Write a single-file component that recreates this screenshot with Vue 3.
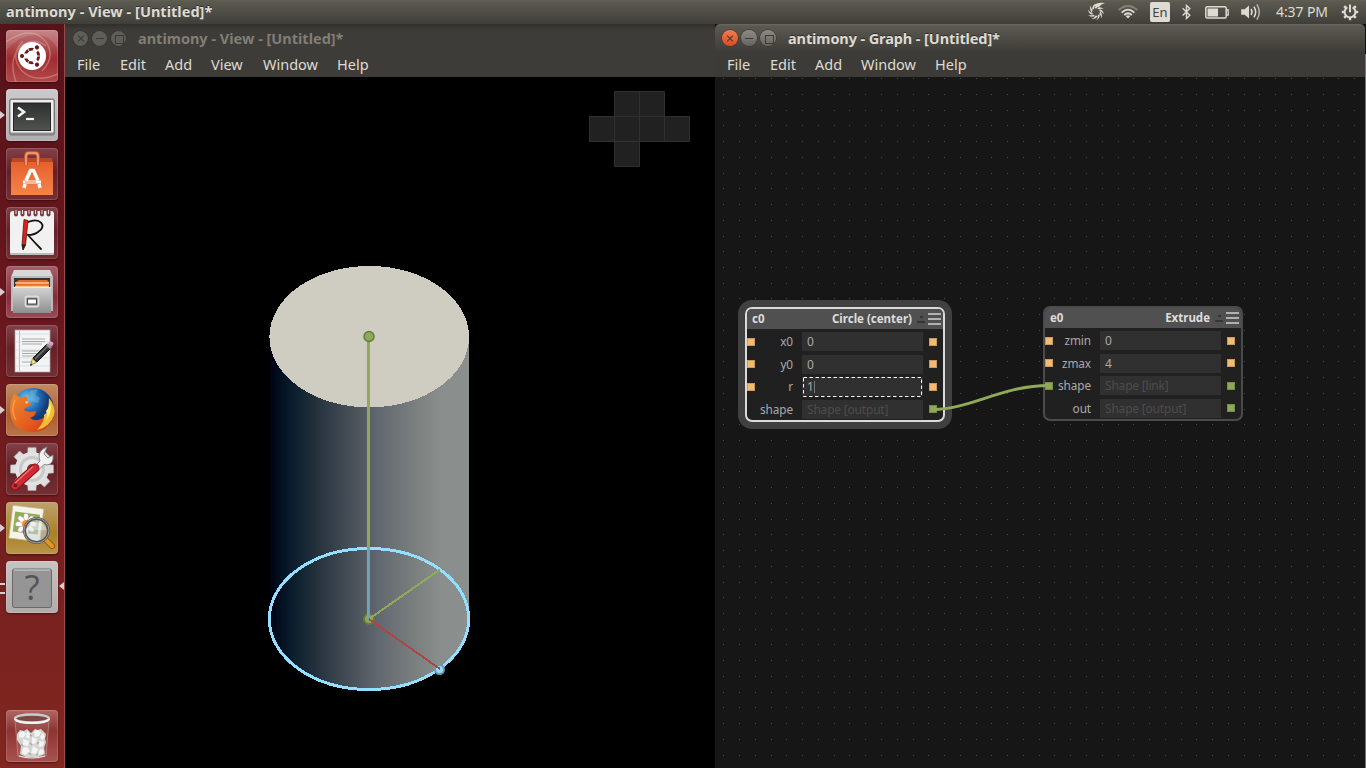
<script setup>
const viewMenus = ['File', 'Edit', 'Add', 'View', 'Window', 'Help']
const graphMenus = ['File', 'Edit', 'Add', 'Window', 'Help']

const nodes = [
  {
    id: 'c0', type: 'Circle (center)', selected: true,
    rows: [
      { label: 'x0', value: '0', left: 'num', right: 'num' },
      { label: 'y0', value: '0', left: 'num', right: 'num' },
      { label: 'r', value: '1', left: 'num', right: 'num', editing: true },
      { label: 'shape', value: 'Shape [output]', muted: true, right: 'geo' },
    ],
  },
  {
    id: 'e0', type: 'Extrude', selected: false,
    rows: [
      { label: 'zmin', value: '0', left: 'num', right: 'num' },
      { label: 'zmax', value: '4', left: 'num', right: 'num' },
      { label: 'shape', value: 'Shape [link]', muted: true, left: 'geo', right: 'geo' },
      { label: 'out', value: 'Shape [output]', muted: true, right: 'geo' },
    ],
  },
]

// One-pixel grid dots, snapped to whole pixels.
let dots = ''
for (let j = 0; j < 44; j++) {
  for (let i = 0; i < 41; i++) {
    dots += `M${Math.round(8.3 + i * 15.77)} ${Math.floor(1.7 + j * 15.73)}h1v1h-1z`
  }
}

const blades = [0, 36, 72, 108, 144, 180, 216, 252, 288, 324]
const teeth = [0, 45, 90, 135, 180, 225, 270, 315]
</script>

<template>
  <div class="desktop">
    <header class="panel">
      <span class="title panel-title">antimony - View - [Untitled]*</span>
      <div class="tray">
        <svg class="t-swirl" width="20" height="20" viewBox="-10 -10 20 20">
          <path v-for="a in blades" :key="a" :transform="`rotate(${a})`" d="M-1.500-4Q0-7.500 4.600-6.900Q1.600-6 .3-3.600" fill="#dfdbd2" />
          <path d="M-3-6Q1-10 9-9Q5-8 3-5z" fill="#dfdbd2" />
        </svg>
        <svg class="t-wifi" width="20" height="16" viewBox="0 0 20 16" fill="none" stroke-width="1.8">
          <path d="M.8 6Q10-2 19.2 6" stroke="#85827a" />
          <path d="M3.6 8.6Q10 2.6 16.4 8.6M6.2 11Q10 7.4 13.8 11" stroke="#dfdbd2" />
          <path d="M7.8 12.2Q10 10.4 12.2 12.2L10 14.6z" fill="#dfdbd2" />
        </svg>
        <span class="t-lang">En</span>
        <svg class="t-bt" width="9" height="16" viewBox="0 0 9 16" fill="none" stroke="#dfdbd2" stroke-width="1.4">
          <path d="M.7 4.3L7.8 11.2L4.5 14.4V1.5L7.8 4.6L.7 11.6" />
        </svg>
        <svg class="t-batt" width="24" height="13" viewBox="0 0 24 13">
          <rect x=".8" y=".8" width="20.4" height="11.2" rx="1.5" fill="none" stroke="#dfdbd2" stroke-width="1.5" />
          <path d="M21.5 4h1.7v5h-1.7" fill="none" stroke="#dfdbd2" stroke-width="1.3" />
          <rect x="2.5" y="2.5" width="10.5" height="8" fill="#dfdbd2" />
        </svg>
        <svg class="t-vol" width="20" height="18" viewBox="0 0 20 18" fill="none" stroke="#dfdbd2" stroke-width="1.5">
          <path d="M.2 6.2h3.5L8 2.500v13l-4.300-3.700H.2z" fill="#dfdbd2" stroke="none" />
          <path d="M10 6q2 3 0 6M12.900 3.700q3.600 5.300 0 10.600" />
          <path d="M15.800 1.400q5 7.600 0 15.200" stroke="#b5b2aa" />
        </svg>
        <span class="t-clock">4:37 PM</span>
        <svg class="t-gear" width="18" height="18" viewBox="-9 -9 18 18" stroke="#dfdbd2" fill="none">
          <path d="M-2.600-4.700A5.400 5.400 0 1 0 2.600-4.700" stroke-width="2" />
          <path d="M0-7.500V.3" stroke-width="2" />
          <path v-for="a in teeth.slice(1)" :key="a" :transform="`rotate(${a})`" d="M0-5.500V-8.200" stroke-width="2.400" />
        </svg>
      </div>
    </header>

    <div class="workspace">
      <nav class="launcher">
        <svg width="0" height="0" class="defs">
          <defs>
            <linearGradient id="orange" x2="0" y2="1"><stop stop-color="#e7602c" /><stop offset="1" stop-color="#f5844a" /></linearGradient>
            <linearGradient id="steel" x2="0" y2="1"><stop stop-color="#d4d4d4" /><stop offset="1" stop-color="#8e8e8e" /></linearGradient>
            <linearGradient id="slate" x2="0" y2="1"><stop stop-color="#303232" /><stop offset="1" stop-color="#505250" /></linearGradient>
            <radialGradient id="globe" cx=".35" cy=".25"><stop stop-color="#75c8ed" /><stop offset=".6" stop-color="#226db5" /><stop offset="1" stop-color="#123b78" /></radialGradient>
            <linearGradient id="fox" x2="1" y2=".8"><stop stop-color="#f18a2d" /><stop offset=".7" stop-color="#e2571e" /><stop offset="1" stop-color="#c73d18" /></linearGradient>
          </defs>
        </svg>

        <div class="tile dash">
          <svg viewBox="0 0 52 52">
            <g fill="none" stroke="#f0b6b0" stroke-opacity=".4" stroke-width="1.500">
              <path d="M0 12Q26-6 40 12Q50 27 36 41M10 52Q2 30 14 17Q27 6 40 16M52 44Q30 54 16 41Q3 25 17 11" />
            </g>
            <path d="M0 0H52V20Q45 4 29 5Q14 5 0 20z" fill="#fff" opacity=".12" />
            <circle cx="26" cy="26" r="14" fill="#fff" />
            <g transform="translate(26 26)" fill="none" stroke="#6d1416">
              <circle r="6.800" stroke-width="2.700" />
              <g v-for="a in [60, 180, 300]" :key="a" :transform="`rotate(${a})`">
                <path d="M5 0H12" stroke="#fff" stroke-width="4.800" />
                <circle cx="10" r="2.100" fill="#6d1416" stroke="none" />
              </g>
              <g v-for="a in [0, 120, 240]" :key="a" :transform="`rotate(${a})`"><path d="M5 0H9" stroke="#fff" stroke-width=".800" /></g>
            </g>
          </svg>
        </div>
        <div class="tile silver running">
          <svg viewBox="0 0 52 52">
            <rect x="3.500" y="10" width="45" height="36" rx="2" fill="#8e8e8e" stroke="#777" />
            <rect x="4.500" y="11" width="43" height="32.500" rx="1" fill="#eee" />
            <rect x="7" y="13.500" width="38" height="28.500" fill="#252727" />
            <rect x="8" y="15" width="36" height="26" fill="url(#slate)" />
            <path d="M12 18.500l6 4.500l-6 4.500" fill="none" stroke="#f3f3f3" stroke-width="2.600" />
            <path d="M20 30h8" stroke="#f3f3f3" stroke-width="2.200" />
          </svg>
        </div>
        <div class="tile wine">
          <svg viewBox="0 0 52 52">
            <path d="M6 10h40l1 6H5z" fill="#ba4822" />
            <path d="M5 14h42v33H5z" fill="url(#orange)" />
            <path d="M20 17V8q0-3 3-3h6q3 0 3 3v9" fill="none" stroke="#b64424" stroke-width="4" />
            <path d="M20 17V8q0-3 3-3h6q3 0 3 3v9" fill="none" stroke="#ee916f" stroke-width="2.400" />
            <g stroke="#fff" fill="none"><path d="M20 32.500L24.500 22.500h3L32 32.500M19 36l-1 4M33 36l1 4" stroke-width="3.500" /><path d="M17 34h18" stroke-width="3" /></g>
            <path d="M19 34h11" stroke="#f07a40" stroke-width="1" />
          </svg>
        </div>
        <div class="tile wine">
          <svg viewBox="0 0 52 52">
            <rect x="4" y="4" width="44" height="44" rx="3" fill="#f1f1f1" />
            <rect x="4" y="46" width="44" height="2" rx="1" fill="#bcbcbc" />
            <path v-for="x in [10, 16.500, 23, 29.500, 36, 42.500]" :key="x" :d="`M${x} 4v3.500`" stroke="#7f3a40" stroke-width="4" stroke-linecap="round" />
            <path v-for="x in [10, 16.500, 23, 29.500, 36, 42.500]" :key="x" :d="`M${x} 3v4`" stroke="#ddd" stroke-width="1" />
            <path d="M22 15C34 10 42 19 32 25Q28 28 22 28Q29 36 35 42" fill="none" stroke="#111" stroke-width="1.800" stroke-linecap="round" />
            <path d="M18 12.500l4 1L19.500 38h-3.500z" fill="#dc221f" stroke="#60110f" stroke-width=".800" />
            <path d="M16 38h3.500l-2.500 5z" fill="#222" stroke="#222" />
          </svg>
        </div>
        <div class="tile rose running">
          <svg viewBox="0 0 52 52">
            <path d="M8 4h36l3 7H5z" fill="#d8d8d8" />
            <path d="M5 10h42v35H5z" fill="#bbb" />
            <path d="M8 12h36v11H8z" fill="#343434" />
            <path d="M10 16l3-2h28l2 2v7H10z" fill="#e76a26" />
            <path d="M9 17h34M9 20.500h34" stroke="#ffc68f" stroke-width="1.300" />
            <path d="M7 21h38v26H7z" fill="url(#steel)" />
            <path d="M7 21.500h38" stroke="#ededed" />
            <rect x="19.500" y="30.500" width="13" height="10" rx="1.500" fill="#888" stroke="#ddd" stroke-width="1.800" />
            <rect x="21.500" y="33" width="9" height="5" fill="#fff" stroke="#444" />
          </svg>
        </div>
        <div class="tile wine">
          <svg viewBox="0 0 52 52">
            <rect x="9" y="5" width="35" height="42" fill="#f4f4f4" stroke="#aaa" stroke-width=".700" />
            <path d="M13.500 6v40" stroke="#f2a8a8" /><path d="M9 9h35M9 17h35M9 25h35M9 33h35M9 41h35" stroke="#cad9e5" stroke-width=".700" />
            <path d="M16 14h23M16 16.500h23M16 19h20M16 26h18M16 28.500h17M16 31h16M16 37h10" stroke="#aaa" stroke-width="1" />
            <path d="M27 33L41 19l4 4L31 37z" fill="#333" stroke="#111" />
            <path d="M29 34l13-13" stroke="#777" stroke-width="1.300" />
            <path d="M40 20l2-2 4 4-2 2z" fill="#999" /><path d="M42 18l2-1.500q3-.5 3.500 2l-1.500 3z" fill="#e79bc5" />
            <path d="M24.500 40l2-6.500 4 4z" fill="#efe085" stroke="#70642b" stroke-width=".700" /><path d="M24 41l1-2.500 1.500 1.500z" fill="#111" />
          </svg>
        </div>
        <div class="tile copper running">
          <svg viewBox="0 0 52 52">
            <circle cx="27" cy="25" r="21" fill="url(#globe)" />
            <path d="M24 7q5-3 8-1l-3 5 5 3-2 5-7-2z" fill="#83c8e5" opacity=".35" />
            <path d="M8 10Q13 12 15 14Q20 11 22 14Q20 17 25 19L24 22Q19 23 18 26Q22 29 30 27Q30 32 24 34Q31 39 39 33Q44 29 44 21Q49 25 47 34Q41 48 27 48Q10 48 5 34Q2 21 8 10z" fill="url(#fox)" />
            <path d="M43 14Q50 22 48 31Q44 43 31 46Q39 37 38 31Q43 29 43 14z" fill="#f5bd35" />
            <path d="M44 18Q47 28 40 37Q42 30 40 27Q43 24 44 18z" fill="#fff07a" />
            <path d="M19 17l4 1-3 2z" fill="#f6d0a0" />
            <path d="M9 16Q4 27 10 36" fill="none" stroke="#ffb35a" stroke-width="1.200" opacity=".7" />
          </svg>
        </div>
        <div class="tile wine">
          <svg viewBox="0 0 52 52">
            <g transform="translate(26 26)">
              <path v-for="a in teeth" :key="a" :transform="`rotate(${a})`" d="M-4.500-14l.5-7.500h8l.5 7.500z" fill="#dedede" stroke="#aaa" stroke-width=".500" />
              <circle r="17" fill="#e2e2e2" /><circle r="13" fill="#c9c9c9" /><circle r="10" fill="#e6e6e6" /><circle r="5" fill="#8c3036" />
            </g>
            <path d="M27 25l7-7q-3-8 3-12l4-2-3 7 4 4 5-3q1 9-6 10l-3-.500-7 7z" fill="#f1f1f1" stroke="#888" />
            <path d="M9 43L29 25" stroke="#841018" stroke-width="9" stroke-linecap="round" />
            <path d="M9 43L29 25" stroke="#cf2931" stroke-width="7" stroke-linecap="round" />
            <path d="M9 40L27 23.500" stroke="#ef7177" stroke-width="1.500" /><circle cx="9.500" cy="42.500" r="1.800" fill="#70171b" />
          </svg>
        </div>
        <div class="tile ochre running">
          <svg viewBox="0 0 52 52">
            <g transform="rotate(7 20 20)">
              <path d="M5 5h31v33H5z" fill="#f4f4ed" stroke="#c5b98b" stroke-width=".700" />
              <path d="M8 11h25v20H8z" fill="#93ae50" />
            </g>
            <g transform="translate(20 22)"><ellipse v-for="a in teeth" :key="a" :transform="`rotate(${a})`" cy="-6" rx="2.600" ry="4.800" fill="#fff" stroke="#b37d9e" stroke-width=".500" /><circle r="4" fill="#f2932c" /></g>
            <path d="M40 38l6 6" stroke="#8e5711" stroke-width="6" stroke-linecap="round" /><path d="M40 38l6 6" stroke="#e39526" stroke-width="4" stroke-linecap="round" />
            <circle cx="30.500" cy="28.500" r="12" fill="#c9d5de" fill-opacity=".5" stroke="#555" stroke-width="3" /><circle cx="30.500" cy="28.500" r="12.500" fill="none" stroke="#aaa" stroke-width=".900" />
            <path d="M20 28q4-9 12-8 7 1 8 8z" fill="#fff" opacity=".35" />
          </svg>
        </div>
        <div class="tile pale active">
          <svg viewBox="0 0 52 52">
            <rect x="6.500" y="8" width="39" height="38.500" rx="2" fill="#959595" stroke="#696969" />
            <path d="M8 9h36" stroke="#d5d5d5" />
            <text x="26" y="38.500" class="question">?</text>
          </svg>
        </div>
        <div class="tile trash">
          <svg viewBox="0 0 52 52">
            <path d="M9 10L12 46Q26 50 40 46L43 10z" fill="#d8c4c1" fill-opacity=".12" stroke="#c0a09c" stroke-width=".600" />
            <path d="M11 24l3-4 4 1 3-2 4 4 4-4 3 1 3-1 5 5-1 5 1 3-2 6 1 6-7 3H20l-6-3 1-8-4-6z" fill="#d3d6d3" />
            <g fill="#f4f5f3">
              <path d="M13 23l4-2 3 3-3 4-4-1zM21 21l3 3-1 5-3-2zM28 22l3-2 4 2-2 4-4 1zM37 23l2 4-3 3-2-3zM17 29l6 2-1 5-5-1zM26 27l5 2-1 4-4 1zM33 31l5 1-1 4-4 1zM17 38l4-1 3 4-5 4-3-2zM27 36l5 3-2 5-5-1zM34 39l4 1-1 4-5 1z" />
            </g>
            <path d="M15 34l2 2M24 33l2 2M31 34l2-2M24 25l2 1M23 43l2 2M30 45l2-1" stroke="#a8aba8" stroke-width="1.500" />
            <path d="M13 46q13 4 26 0" stroke="#e8e8e8" stroke-width="1.200" fill="none" />
            <ellipse cx="26" cy="8.500" rx="17" ry="4" fill="#7c4844" stroke="#c9cbca" stroke-width="2.400" />
            <path d="M9 9q2 4 17 4t17-4" fill="none" stroke="#f5f5f5" stroke-width="2" />
          </svg>
        </div>
      </nav>

      <section class="window view-window">
        <div class="chrome">
          <div class="titlebar">
            <i class="wb close"></i><i class="wb min"></i><i class="wb max"></i>
            <span class="title">antimony - View - [Untitled]*</span>
          </div>
          <div class="menubar"><span v-for="m in viewMenus" :key="m" :class="`m-${m.toLowerCase()}`">{{ m }}</span></div>
        </div>
        <svg class="scene" width="650" height="691" viewBox="65 77 650 691">
          <defs>
            <linearGradient id="side">
              <stop stop-color="#00000f" /><stop offset=".03" stop-color="#000a1b" /><stop offset=".12" stop-color="#0b1e2d" />
              <stop offset=".25" stop-color="#28343f" /><stop offset=".4" stop-color="#454e57" /><stop offset=".55" stop-color="#62686f" />
              <stop offset=".7" stop-color="#767c7c" /><stop offset=".85" stop-color="#898d8b" /><stop offset="1" stop-color="#8b8f8d" />
            </linearGradient>
          </defs>
          <path d="M269.500 336V619A99.500 70.500 0 0 0 469 619V336z" fill="url(#side)" shape-rendering="crispEdges" />
          <ellipse cx="369.200" cy="336.700" rx="99.800" ry="70.700" fill="#cfccc1" shape-rendering="crispEdges" />
          <ellipse cx="369" cy="619" rx="99.700" ry="70.500" fill="none" stroke="#94dfff" stroke-width="3" shape-rendering="crispEdges" />
          <circle cx="369" cy="619" r="5" fill="#8ea656" stroke="#687c39" stroke-width="2" />
          <path d="M368.500 337V548" stroke="#92a95a" stroke-width="3" />
          <path d="M367.500 548V619" stroke="#92a95a" stroke-width="1" />
          <path d="M369 548V620" stroke="#6f9fb9" stroke-width="2" />
          <path d="M369 619L440 569.500" stroke="#92a95a" stroke-width="2" shape-rendering="crispEdges" />
          <circle cx="439.500" cy="669.500" r="4.500" fill="#94dfff" stroke="#659bb3" stroke-width="2" />
          <path d="M369 619L440 669" stroke="#b04444" stroke-width="2" shape-rendering="crispEdges" />
          <circle cx="369" cy="336.500" r="5" fill="#8faa57" stroke="#667b3b" stroke-width="1.500" />
          <g stroke="#303030">
            <path d="M614.500 91.500h50v25h25v25h-50v25h-25v-25h-25v-25h25z" fill="#212121" />
            <path d="M614.500 116.500h50v25M639.500 91.500v50M614.500 116.500v25h25" fill="none" />
          </g>
        </svg>
      </section>

      <section class="window graph-window">
        <div class="chrome">
          <div class="titlebar">
            <i class="wb close"></i><i class="wb min"></i><i class="wb max"></i>
            <span class="title">antimony - Graph - [Untitled]*</span>
          </div>
          <div class="menubar"><span v-for="m in graphMenus" :key="m" :class="`m-${m.toLowerCase()}`">{{ m }}</span></div>
        </div>
        <div class="canvas">
          <svg class="dots" width="651" height="691"><path :d="dots" fill="#494949" shape-rendering="crispEdges" /></svg>
          <article v-for="n in nodes" :key="n.id" class="node" :class="[n.id, { selected: n.selected }]">
            <div class="node-head">
              <b>{{ n.id }}</b><b class="type">{{ n.type }}</b>
              <svg width="25" height="14" viewBox="0 0 25 14" shape-rendering="crispEdges">
                <path d="M3 4h3v2h-3zM0 9h8v2H0z" fill="#353535" />
                <path d="M11 1h13v2H11zM11 6h13v2H11zM11 11h13v2H11z" fill="#b1b1b1" />
              </svg>
            </div>
            <div v-for="r in n.rows" :key="r.label" class="row">
              <i class="port" :class="r.left"></i>
              <span class="label">{{ r.label }}</span>
              <span class="field" :class="{ muted: r.muted }">{{ r.value }}<svg v-if="r.editing" class="caret-box" width="121" height="20"><rect x="1.500" y=".5" width="118" height="19" fill="none" stroke="#fff" stroke-dasharray="3.500 2.500" /><path d="M12.500 4v12" stroke="#777" /></svg></span>
              <i class="port" :class="r.right"></i>
            </div>
          </article>
          <svg class="wire" width="651" height="691"><path d="M218 332.500C255 332.500 287 308.500 334 308.500" fill="none" stroke="#91a95b" stroke-width="3" /></svg>
        </div>
      </section>
    </div>
  </div>
</template>

<style>
html, body { margin: 0; background: #000; }
</style>

<style scoped>
.desktop { width: 1366px; height: 768px; overflow: hidden; display: flex; flex-direction: column; background: #000; color: #dfdbd2; font: 14.5px/20px "Noto Sans", "Open Sans", sans-serif; }
.desktop * { box-sizing: border-box; }
.panel { height: 24px; flex: none; display: flex; justify-content: space-between; align-items: center; padding: 0 7px 0 6px; background: linear-gradient(#63614f 0, #5c5b52 1px, #3f3e39); }
.title { font-size: 14.5px; font-weight: 700; line-height: 18px; padding-bottom: 2px; white-space: nowrap; text-shadow: 0 -1px #2f2e2a; }
.panel-title { letter-spacing: .03px; }
.tray { display: flex; align-items: center; height: 24px; }
.t-wifi { margin-left: 12px; }
.t-lang { width: 20px; height: 20px; margin-left: 12px; background: #dfdbd2; color: #46443e; border-radius: 2px; text-align: center; font-size: 13px; }
.t-bt { margin-left: 12px; }
.t-batt { margin-left: 14px; }
.t-vol { margin-left: 12px; }
.t-clock { width: 54px; margin-left: 15px; font-size: 14px; letter-spacing: -.1px; white-space: nowrap; }
.t-gear { margin-left: 11px; }
.workspace { display: flex; height: 744px; background: linear-gradient(#111 30px, #777 30px); }
.defs { position: absolute; }
.launcher { width: 65px; flex: none; border-right: 1px solid #984a49; padding: 6px; display: flex; flex-direction: column; gap: 7px; background: linear-gradient(#57121a, #6c181e 45%, #812720); }
.tile { position: relative; width: 52px; height: 52px; flex: none; border-radius: 4px; box-shadow: inset 0 0 0 1px rgba(255,255,255,.15), 0 1px 2px rgba(0,0,0,.4); }
.tile > svg { display: block; width: 52px; height: 52px; }
.dash { background: linear-gradient(#bc7678, #a02c30 55%, #b14a4a); }
.dash svg { border-radius: 4px; }
.silver { background: linear-gradient(#cdc8c9, #b2aeb0); }
.wine { background: linear-gradient(#824148, #642026 45%, #742f33); }
.rose { background: linear-gradient(#a56068, #862b39 60%, #9a4b55); }
.copper { background: linear-gradient(#c28c64, #a95d31 60%, #ba754a); }
.ochre { background: linear-gradient(#bfa16c, #a98129 60%, #b9954a); }
.pale { background: linear-gradient(#c8c3c3, #b2abac); }
.trash { margin-top: auto; background: linear-gradient(#b06765, #8d3431 40%, #a95350); }
.question { font: 35px "Open Sans", sans-serif; text-anchor: middle; fill: #545454; }
.running::before { content: ""; position: absolute; left: -6px; top: 22px; border: solid transparent; border-width: 4px 0 4px 5px; border-left-color: #d9cccd; }
.active::before { content: ""; position: absolute; left: -6px; top: 22px; width: 5px; height: 7px; border: solid #d9cccd; border-width: 2px 0; }
.active::after { content: ""; position: absolute; right: -6px; top: 21px; border: solid transparent; border-width: 4px 5px 4px 0; border-right-color: #d9cccd; }
.window { display: flex; flex-direction: column; height: 744px; background: #000; }
.view-window { width: 650px; }
.graph-window { width: 650px; background: #2c2b28; border-radius: 5px 5px 0 0; }
.chrome { height: 53px; flex: none; background: linear-gradient(#302f2c, #3d3c38 6px); }
.graph-window .chrome { border-radius: 5px 5px 0 0; background: linear-gradient(#6b695f, #5b5950 2px, #3d3b37 29px); }
.titlebar { height: 30px; display: flex; align-items: center; padding: 0 7px; gap: 3px; }
.titlebar .title { margin-left: 9px; }
.graph-window .title { letter-spacing: -.1px; }
.view-window .titlebar { padding-left: 8px; }
.view-window .title { color: #817e76; text-shadow: none; margin-left: 8px; }
.wb { position: relative; width: 16px; height: 16px; margin-top: -2px; border-radius: 50%; background: linear-gradient(#8d8b83, #66645e); box-shadow: 0 0 0 .5px #302f2c; }
.wb::before, .wb::after { content: ""; position: absolute; left: 4px; top: 7.5px; width: 8px; height: 1px; background: #3b3a36; }
.min::after { display: none; }
.close::before { transform: rotate(45deg); }
.close::after { transform: rotate(-45deg); }
.max::before { left: 4.5px; top: 4.5px; width: 7px; height: 7px; border: 1px solid #3b3a36; background: none; }
.max::after { display: none; }
.graph-window .close { background: linear-gradient(#f47a51, #df4c20); }
.view-window .wb { background: #5f5d57; width: 15px; height: 15px; margin-right: 1px; }
.view-window .wb::before, .view-window .wb::after { left: 3.5px; top: 7px; }
.view-window .max::before { left: 4px; top: 4px; }
.menubar { display: flex; padding: 0 12px; height: 22px; }
.menubar span { white-space: nowrap; }
.m-file { width: 43px; }
.m-edit { width: 45px; }
.m-add { width: 46px; }
.m-view { width: 52px; }
.m-window { width: 74px; }
.scene { display: block; }
.canvas { position: relative; height: 691px; background: #161616; overflow: hidden; }
.dots, .wire { position: absolute; left: 0; top: 0; pointer-events: none; }
.node { position: absolute; height: 115px; border: 2px solid #4b4b4b; border-radius: 7px; background: #202020; overflow: hidden; font-size: 12px; line-height: 19px; color: #aaa; }
.node.c0 { left: 30px; top: 230px; width: 200px; }
.node.e0 { left: 328px; top: 229px; width: 200px; }
.node.selected { border-color: #dadada; box-shadow: 0 0 0 7px #404040; }
.node-head { height: 20px; display: flex; align-items: center; background: #505050; color: #ddd; padding: 0 1px 0 5px; font-size: 11.5px; line-height: 18px; }
.node-head b { padding-bottom: 1px; }
.node-head .type { margin-left: auto; margin-right: 5px; }
.row { height: 20px; margin: 2.500px 0 .300px; display: flex; align-items: center; }
.port { width: 8px; height: 8px; flex: none; }
.num { background: #f3bb71; box-shadow: inset 0 0 0 1px #c99a5d; }
.geo { background: #8ea758; box-shadow: inset 0 0 0 1px #768b49; }
.label { width: 38px; text-align: right; font-size: 11.8px; letter-spacing: -.1px; }
.field { position: relative; width: 121px; height: 19px; margin: 0 6px 0 9px; padding-left: 5px; background: #303030; white-space: nowrap; letter-spacing: -.2px; }
.field.muted { color: #4c4c4c; }
.caret-box { position: absolute; left: 0; top: 0; }
</style>
